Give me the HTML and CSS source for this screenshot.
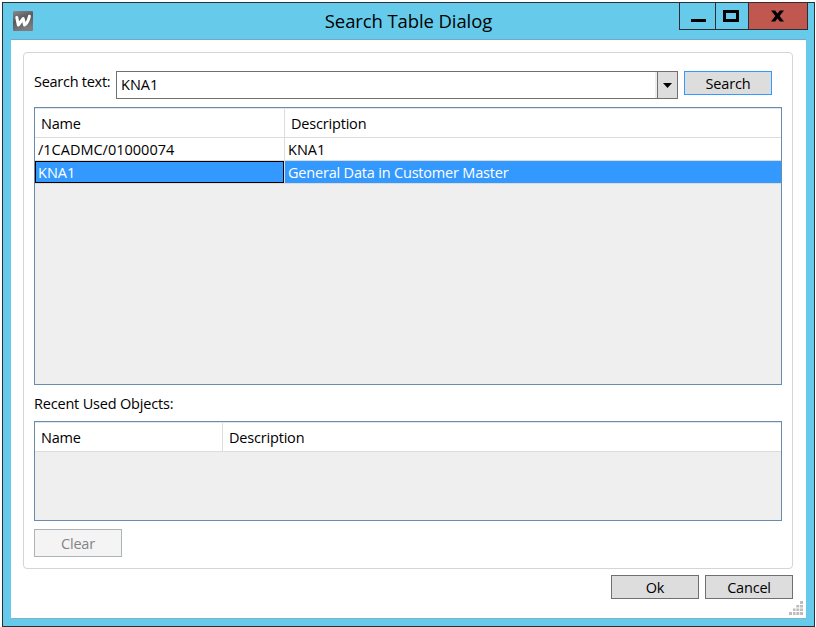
FILE: index.html
```html
<!DOCTYPE html>
<html lang="en">
<head>
<meta charset="utf-8">
<title>Search Table Dialog</title>
<link rel="stylesheet" href="styles.css">
</head>
<body>
<div class="window">
  <header class="titlebar">
    <svg class="app-icon" width="20" height="20" viewBox="0 0 20 20">
      <defs><linearGradient id="g" x1="0" y1="0" x2="0.4" y2="1"><stop offset="0" stop-color="#8b8b8d"/><stop offset="0.5" stop-color="#59595b"/><stop offset="1" stop-color="#7d7d80"/></linearGradient></defs>
      <rect width="20" height="20" rx="1" fill="url(#g)"/>
      <path d="M3.800 6.500L5.300 14L10.200 7.500L11.500 14Q15 11.500 16.400 5.300" fill="none" stroke="#fff" stroke-width="3" stroke-linecap="round" stroke-linejoin="round"/>
    </svg>
    <h1 class="title">Search Table Dialog</h1>
    <div class="caption-buttons">
      <button class="caption minimize" aria-label="Minimize"><svg width="15" height="3"><path d="M0 0h15v3H0z"/></svg></button>
      <button class="caption maximize" aria-label="Maximize"><svg width="16" height="12"><path d="M1.5 1.5h13v9h-13z" fill="none" stroke="#000" stroke-width="3"/></svg></button>
      <button class="caption close" aria-label="Close"><svg width="13" height="12" viewBox="0 0 14 12"><path d="M0 0H4.500L7 3.400L9.500 0H14L9.300 6L14 12H9.500L7 8.600L4.500 12H0L4.700 6Z"/></svg></button>
    </div>
  </header>
  <main class="client">
    <section class="group">
      <div class="search-row">
        <label class="label">Search text:</label>
        <div class="combo"><span class="combo-value code">KNA1</span><span class="combo-arrow"><svg width="9" height="5"><path d="M0 0h9L4.500 5z"/></svg></span></div>
        <button class="button primary">Search</button>
      </div>
      <div class="grid results">
        <div class="row head"><span class="cell">Name</span><span class="cell">Description</span></div>
        <div class="row"><span class="cell code">/1CADMC/01000074</span><span class="cell code">KNA1</span></div>
        <div class="row selected"><span class="cell current code">KNA1</span><span class="cell">General Data in Customer Master</span></div>
      </div>
      <div class="recent-label">Recent Used Objects:</div>
      <div class="grid recent">
        <div class="row head"><span class="cell">Name</span><span class="cell">Description</span></div>
      </div>
      <button class="button clear" disabled>Clear</button>
    </section>
    <footer class="actions"><button class="button">Ok</button><button class="button">Cancel</button></footer>
    <svg class="grip" width="14" height="14" fill="#bdbdbd"><path d="M11 0h3v3h-3zM7.300 4h3v2.500h-3zM11 4h3v2.500h-3zM4 7.500h2.500v2.500H4zM7.300 7.500h3v2.500h-3zM11 7.500h3v2.500h-3zM0 11h3v3H0zM4 11h2.500v3H4zM7.300 11h3v3h-3zM11 11h3v3h-3z"/></svg>
  </main>
</div>
</body>
</html>
```
FILE: styles.css
```css
* { box-sizing: border-box; }
html, body { margin: 0; height: 100%; overflow: hidden; }
body {
  padding: 2px 1px 0 2px;
  background: #fff;
  color: #000;
  font: 14.5px/20px "Open Sans", "Noto Sans", sans-serif;
  letter-spacing: -0.19px;
}
button { font: inherit; color: inherit; letter-spacing: inherit; padding: 0; margin: 0; border-radius: 0; }
.window {
  display: flex;
  flex-direction: column;
  width: 813px;
  height: 625px;
  padding: 0 8px 7px;
  border: 1px solid #2d2d32;
  background: #66cbea;
}
.titlebar { display: grid; grid-template-columns: 129px 1fr 129px; height: 36px; flex: none; }
.app-icon { margin: 8px 0 0 2px; }
.title { margin: 5px 0 0; text-align: center; font-size: 18.5px; font-weight: 400; line-height: 26px; white-space: nowrap; letter-spacing: -0.1px; }
.caption-buttons { display: flex; width: 129px; height: 28px; margin: -1px -2px 0 2px; border: 1px solid #2d2d32; }
.caption { border: 0; background: transparent; height: 26px; display: flex; justify-content: center; }
.minimize { width: 35px; padding-top: 16px; padding-left: 2px; }
.maximize { width: 34px; border-left: 1px solid #2d2d32; padding-top: 7px; padding-right: 3px; }
.close { flex: 1; margin-left: -1px; border-left: 1px solid #2d2d32; background: #c1584f; padding-top: 7px; padding-right: 1px; }
.client {
  position: relative;
  flex: 1;
  padding: 12px;
  border-top: 1px solid #74a9c4;
  border-bottom: 1px solid #7fb5cb;
  background: #fff;
  width: 795px;
}
.group { width: 770px; height: 517px; padding: 18px 10px 0; border: 1px solid #d5d5d5; border-radius: 4px; }
.search-row { display: flex; height: 28px; }
.label { width: 82px; margin-top: 1px; white-space: nowrap; letter-spacing: -0.27px; }
.code { letter-spacing: 0; }
.combo { display: flex; width: 562px; height: 28px; border: 1px solid #707070; }
.combo-value { flex: 1; padding: 3px 4px; border-right: 2px solid #ececec; }
.combo-arrow { display: flex; align-items: center; justify-content: center; width: 20px; border-left: 1px solid #707070; background: #ddd; }
.button { width: 88px; height: 24px; border: 1px solid #707070; background: #ddd; line-height: 22px; text-align: center; padding-top: 1px; }
.primary { margin-left: 6px; border-color: #3399ff; }
.grid { width: 748px; border: 1px solid #688caf; background: #efefef; }
.results { height: 278px; margin-top: 8px; --name: 250px; }
.recent { height: 100px; margin-top: 7px; --name: 188px; }
.row { display: grid; grid-template-columns: var(--name) 1fr; height: 23px; background: #fff; border-bottom: 1px solid #dcdcdc; line-height: 24px; }
.cell { height: 22px; padding-left: 3px; white-space: nowrap; }
.cell:first-child { border-right: 1px solid #dcdcdc; }
.row.head { height: 30px; line-height: 29px; border-top: 1px solid #e5e5e5; }
.head .cell { height: 28px; padding-left: 6px; }
.row.selected { background: #3399ff; color: #fff; }
.cell.current { margin-right: 1px; padding-left: 2px; border: 1px solid #000; line-height: 22px; box-shadow: 1px 0 #dcdcdc; }
.cell.current:first-child { border-color: #000; }
.recent-label { margin-top: 9px; }
.clear { display: block; height: 28px; margin-top: 8px; border-color: #adb2b5; background: #f4f4f4; color: #838383; line-height: 26px; }
.actions { display: flex; justify-content: flex-end; gap: 6px; width: 770px; margin-top: 6px; }
.grip { position: absolute; right: 3px; bottom: 3px; }
```
